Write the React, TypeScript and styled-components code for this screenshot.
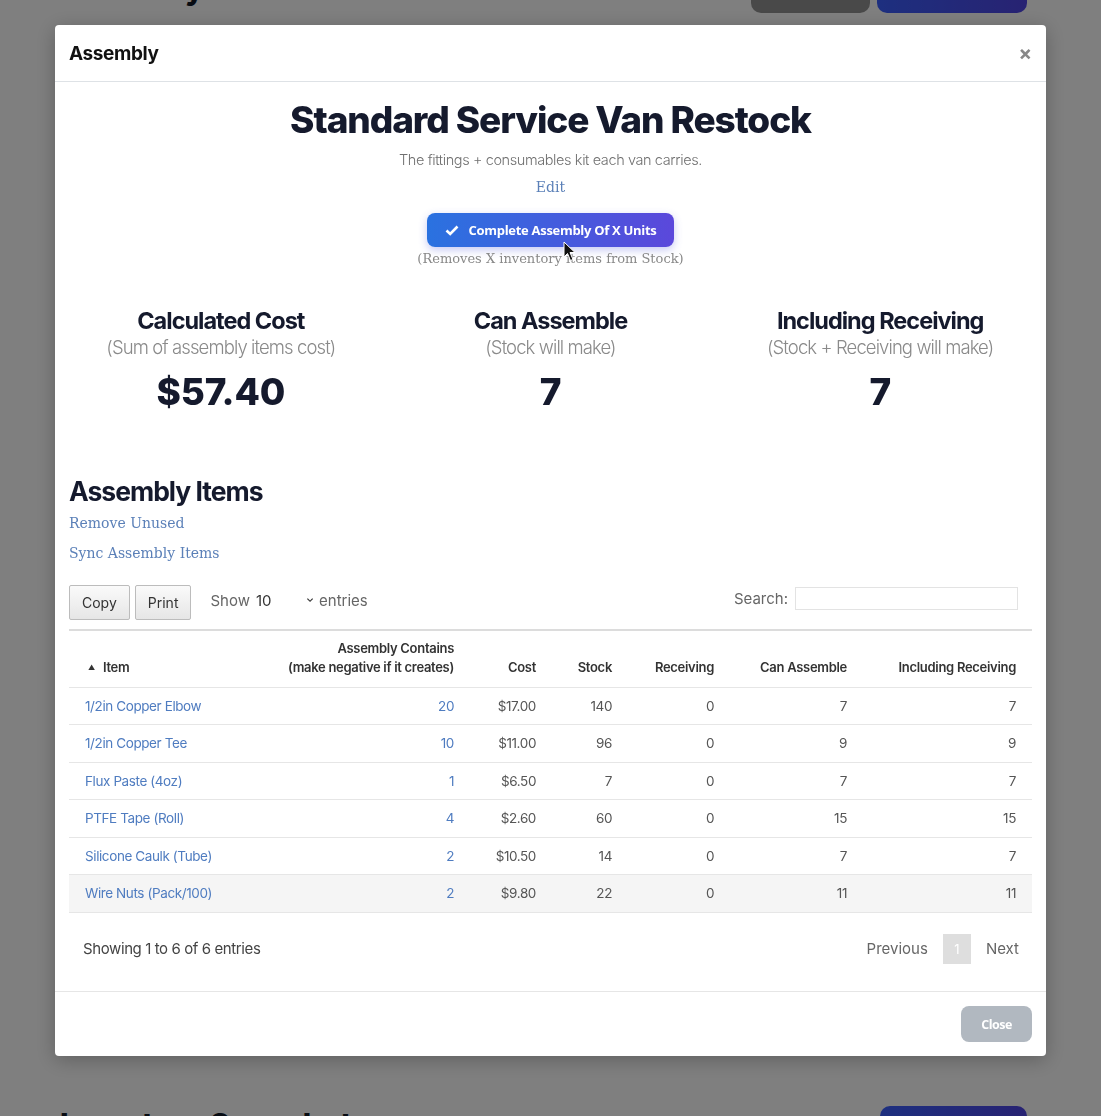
import React from 'react';
import styled, { createGlobalStyle } from 'styled-components';

// global page reset
const GlobalStyle = createGlobalStyle`
    html, body {
        margin: 0;
        padding: 0;
        height: 100%;
        overflow: hidden;
        background: #ffffff;
        font-family: Inter, "Noto Sans", sans-serif;
    }
`;

const SANS = `Inter, "Noto Sans", sans-serif`;
const SERIF = `"DejaVu Serif", "Liberation Serif", serif`;

// page behind the modal
const Page = styled.div`
    height: 1116px;
    padding: 0 74px 0 60px;
    display: flex;
    flex-direction: column;
    justify-content: space-between;
    box-sizing: border-box;
`;

const PageRow = styled.div<{ $top?: boolean }>`
    display: flex;
    align-items: center;
    justify-content: space-between;
    margin-top: ${p => (p.$top ? '-23px' : '0')};
    margin-bottom: ${p => (p.$top ? '0' : '-26px')};
`;

const PageTitle = styled.h1<{ $top?: boolean }>`
    margin: 0;
    font-size: 30px;
    font-weight: 800;
    color: #111827;
    position: relative;
    top: ${p => (p.$top ? '-6px' : '0')};
`;

const PageButtons = styled.div`
    display: flex;
    gap: 7px;
`;

const PageButton = styled.div<{ $dark?: boolean; $w: number }>`
    width: ${p => p.$w}px;
    height: 36px;
    border-radius: 10px;
    background: ${p => (p.$dark ? '#939393' : 'linear-gradient(90deg, #3b5fff, #5046e5)')};
`;

// modal overlay
const Overlay = styled.div`
    position: fixed;
    inset: 0;
    background: rgba(0, 0, 0, 0.5);
    display: flex;
    justify-content: center;
    padding-top: 25px;
`;

const Modal = styled.div`
    width: 991px;
    height: 1031px;
    background: #fff;
    border-radius: 4px;
    display: flex;
    flex-direction: column;
    box-shadow: 0 4px 20px rgba(0, 0, 0, 0.25);
`;

const ModalHeader = styled.div`
    height: 56px;
    padding: 0 14px;
    display: flex;
    align-items: center;
    justify-content: space-between;
    border-bottom: 1px solid #dee2e6;
`;

const ModalTitle = styled.h5`
    margin: 0;
    font-size: 19px;
    font-weight: 700;
    letter-spacing: -0.4px;
    color: #111;
`;

const CloseX = styled.span`
    font-size: 20px;
    font-weight: 700;
    color: #888;
    line-height: 1;
`;

const ModalBody = styled.div`
    flex: 1;
    padding: 0 14px;
    display: flex;
    flex-direction: column;
`;

const Hero = styled.div`
    display: flex;
    flex-direction: column;
    align-items: center;
    padding-top: 16px;
`;

const HeroTitle = styled.h2`
    margin: 0;
    font-size: 37px;
    font-weight: 800;
    letter-spacing: -1.1px;
    color: #151a2d;
    line-height: 44px;
`;

const HeroSub = styled.div`
    margin-top: 9px;
    font-size: 14.5px;
    font-weight: 300;
    letter-spacing: -0.4px;
    color: #707070;
`;

const SerifLink = styled.a`
    font-family: ${SERIF};
    font-size: 14px;
    color: #5b80b8;
    text-decoration: none;
    cursor: pointer;
`;

const EditLink = styled(SerifLink)`
    margin-top: 11px;
`;

const PrimaryButton = styled.button`
    margin-top: 18px;
    width: 247px;
    height: 34px;
    border: none;
    border-radius: 8px;
    background: linear-gradient(90deg, #2a72e0, #5b48db);
    box-shadow: 0 3px 8px rgba(70, 80, 220, 0.3);
    color: #fff;
    font-family: "Open Sans", ${SANS};
    font-size: 13px;
    font-weight: 700;
    letter-spacing: -0.3px;
    display: flex;
    align-items: center;
    justify-content: center;
    gap: 10px;
`;

const Note = styled.div`
    margin-top: 4px;
    font-family: ${SERIF};
    font-size: 13px;
    color: #888;
    position: relative;
`;

const StatsRow = styled.div`
    display: grid;
    grid-template-columns: repeat(3, 1fr);
    margin: 40px -13px 0;
`;

const Stat = styled.div`
    display: flex;
    flex-direction: column;
    align-items: center;
`;

const StatTitle = styled.div`
    font-size: 23.5px;
    font-weight: 700;
    letter-spacing: -1px;
    color: #151a2d;
`;

const StatSub = styled.div`
    margin-top: 1px;
    font-size: 18.5px;
    font-weight: 300;
    letter-spacing: -0.9px;
    color: #8a8a8a;
`;

const StatValue = styled.div`
    margin-top: 11px;
    font-size: 37px;
    font-weight: 800;
    letter-spacing: -0.2px;
    color: #151a2d;
`;

const SectionTitle = styled.h3`
    margin: 61px 0 0;
    font-size: 26.5px;
    font-weight: 700;
    letter-spacing: -1px;
    color: #151a2d;
`;

const LinkStack = styled.div`
    display: flex;
    flex-direction: column;
    gap: 14px;
    margin-top: 8px;
`;

const Controls = styled.div`
    display: flex;
    align-items: center;
    margin-top: 24px;
    padding-bottom: 9px;
`;

const ToolButton = styled.button`
    height: 35px;
    padding: 0 12px;
    margin-right: 5px;
    border: 1px solid #bcbcbc;
    border-radius: 2px;
    background: linear-gradient(#fafafa, #e6e6e6);
    font-family: ${SANS};
    font-size: 14px;
    color: #333;
`;

const Length = styled.div`
    margin-left: 14px;
    display: flex;
    align-items: center;
    font-size: 15px;
    color: #666;
    flex: 1;
    position: relative;
    top: -2px;
`;

const LengthValue = styled.span`
    color: #333;
    margin-left: 6px;
    width: 50px;
`;

const Chevron = styled.span`
    font-size: 10px;
    font-weight: 700;
    color: #333;
    margin-right: 5px;
    position: relative;
    top: -3px;
`;

const SearchLabel = styled.label`
    font-size: 15px;
    color: #666;
    display: flex;
    align-items: center;
    gap: 7px;
    margin-right: 14px;
    position: relative;
    top: -4px;
`;

const SearchInput = styled.input`
    width: 221px;
    height: 21px;
    border: 1px solid #e3e3e3;
    padding: 0;
`;

const Table = styled.table`
    width: 100%;
    border-collapse: collapse;
    border-top: 2px solid #dcdcdc;
    table-layout: fixed;
`;

const Th = styled.th<{ $w: number; $left?: boolean }>`
    box-sizing: border-box;
    width: ${p => p.$w}px;
    padding: 0 16px 10px;
    height: 57px;
    vertical-align: bottom;
    text-align: ${p => (p.$left ? 'left' : 'right')};
    font-size: 13px;
    font-weight: 600;
    letter-spacing: -0.3px;
    color: #333;
    border-bottom: 1px solid #e6e6e6;
    line-height: 19px;
    white-space: nowrap;
`;

const SortIcon = styled.span`
    font-size: 7px;
    margin: 0 8px 0 3px;
    vertical-align: 2px;
`;

const Tr = styled.tr<{ $hover?: boolean }>`
    background: ${p => (p.$hover ? '#f5f5f5' : 'transparent')};
`;

const Td = styled.td<{ $left?: boolean; $link?: boolean }>`
    height: 36.5px;
    padding: 0 16px;
    text-align: ${p => (p.$left ? 'left' : 'right')};
    font-size: 13.5px;
    font-weight: 400;
    letter-spacing: -0.4px;
    color: ${p => (p.$link ? '#4f7cc0' : '#555')};
    border-bottom: 1px solid #e6e6e6;
    white-space: nowrap;
`;

const TableFooter = styled.div`
    display: flex;
    align-items: center;
    justify-content: space-between;
    padding: 21px 13px 0 14px;
`;

const Info = styled.div`
    font-size: 15px;
    letter-spacing: -0.4px;
    color: #444;
`;

const Pager = styled.div`
    display: flex;
    align-items: center;
    gap: 15px;
    font-size: 15px;
    color: #666;
`;

const PageNum = styled.span`
    width: 28px;
    height: 30px;
    background: #dedede;
    color: #fff;
    font-size: 13px;
    display: flex;
    align-items: center;
    justify-content: center;
`;

const ModalFooter = styled.div`
    height: 64px;
    border-top: 1px solid #e6e6e6;
    display: flex;
    align-items: center;
    justify-content: flex-end;
    padding: 0 14px;
`;

const CloseButton = styled.button`
    width: 71px;
    height: 36px;
    border: none;
    border-radius: 8px;
    background: #b1b8c0;
    color: #fff;
    font-family: "Open Sans", ${SANS};
    font-size: 12.5px;
    font-weight: 700;
    letter-spacing: -0.5px;
`;

const Cursor = styled.svg`
    position: absolute;
    left: 146px;
    top: -10px;
`;

interface Item {
    name: string;
    qty: number;
    cost: string;
    stock: number;
    receiving: number;
    can: number;
    incl: number;
}

const items: Item[] = [
    { name: '1/2in Copper Elbow', qty: 20, cost: '$17.00', stock: 140, receiving: 0, can: 7, incl: 7 },
    { name: '1/2in Copper Tee', qty: 10, cost: '$11.00', stock: 96, receiving: 0, can: 9, incl: 9 },
    { name: 'Flux Paste (4oz)', qty: 1, cost: '$6.50', stock: 7, receiving: 0, can: 7, incl: 7 },
    { name: 'PTFE Tape (Roll)', qty: 4, cost: '$2.60', stock: 60, receiving: 0, can: 15, incl: 15 },
    { name: 'Silicone Caulk (Tube)', qty: 2, cost: '$10.50', stock: 14, receiving: 0, can: 7, incl: 7 },
    { name: 'Wire Nuts (Pack/100)', qty: 2, cost: '$9.80', stock: 22, receiving: 0, can: 11, incl: 11 },
];

const stats = [
    { title: 'Calculated Cost', sub: '(Sum of assembly items cost)', value: '$57.40' },
    { title: 'Can Assemble', sub: '(Stock will make)', value: '7' },
    { title: 'Including Receiving', sub: '(Stock + Receiving will make)', value: '7' },
];

const App: React.FC = () => {
    return (
        <>
            <GlobalStyle />
            <Page>
                <PageRow $top>
                    <PageTitle $top>Inventory</PageTitle>
                    <PageButtons>
                        <PageButton $dark $w={119} />
                        <PageButton $w={150} />
                    </PageButtons>
                </PageRow>
                <PageRow>
                    <PageTitle>Inventory Snapshot</PageTitle>
                    <PageButtons>
                        <PageButton $w={147} />
                    </PageButtons>
                </PageRow>
            </Page>

            <Overlay>
                <Modal>
                    <ModalHeader>
                        <ModalTitle>Assembly</ModalTitle>
                        <CloseX>×</CloseX>
                    </ModalHeader>

                    <ModalBody>
                        <Hero>
                            <HeroTitle>Standard Service Van Restock</HeroTitle>
                            <HeroSub>The fittings + consumables kit each van carries.</HeroSub>
                            <EditLink>Edit</EditLink>
                            <PrimaryButton>
                                <svg width="14" height="11" viewBox="0 0 14 11">
                                    <path d="M1.5 5.5 L5.2 9 L12.5 1.5" stroke="#fff" strokeWidth="2.6" fill="none" />
                                </svg>
                                Complete Assembly Of X Units
                            </PrimaryButton>
                            <Note>
                                (Removes X inventory items from Stock)
                                <Cursor width="14" height="21" viewBox="0 0 14 21">
                                    <path d="M1 1 L1 16 L4.5 12.5 L7.5 19.5 L10 18.5 L7 11.5 L12 11.5 Z" fill="#111" stroke="#fff" strokeWidth="1" />
                                </Cursor>
                            </Note>
                        </Hero>

                        <StatsRow>
                            {stats.map(s => (
                                <Stat key={s.title}>
                                    <StatTitle>{s.title}</StatTitle>
                                    <StatSub>{s.sub}</StatSub>
                                    <StatValue>{s.value}</StatValue>
                                </Stat>
                            ))}
                        </StatsRow>

                        <SectionTitle>Assembly Items</SectionTitle>
                        <LinkStack>
                            <SerifLink>Remove Unused</SerifLink>
                            <SerifLink>Sync Assembly Items</SerifLink>
                        </LinkStack>

                        <Controls>
                            <ToolButton>Copy</ToolButton>
                            <ToolButton>Print</ToolButton>
                            <Length>
                                Show <LengthValue>10</LengthValue>
                                <Chevron>⌄</Chevron> entries
                            </Length>
                            <SearchLabel>
                                Search:
                                <SearchInput />
                            </SearchLabel>
                        </Controls>

                        <Table>
                            <thead>
                                <tr>
                                    <Th $w={201} $left><SortIcon>▲</SortIcon>Item</Th>
                                    <Th $w={200}>Assembly Contains<br />(make negative if it creates)</Th>
                                    <Th $w={82}>Cost</Th>
                                    <Th $w={76}>Stock</Th>
                                    <Th $w={102}>Receiving</Th>
                                    <Th $w={133}>Can Assemble</Th>
                                    <Th $w={169}>Including Receiving</Th>
                                </tr>
                            </thead>
                            <tbody>
                                {items.map((it, i) => (
                                    <Tr key={it.name} $hover={i === items.length - 1}>
                                        <Td $left $link>{it.name}</Td>
                                        <Td $link>{it.qty}</Td>
                                        <Td>{it.cost}</Td>
                                        <Td>{it.stock}</Td>
                                        <Td>{it.receiving}</Td>
                                        <Td>{it.can}</Td>
                                        <Td>{it.incl}</Td>
                                    </Tr>
                                ))}
                            </tbody>
                        </Table>

                        <TableFooter>
                            <Info>Showing 1 to 6 of 6 entries</Info>
                            <Pager>
                                <span>Previous</span>
                                <PageNum>1</PageNum>
                                <span>Next</span>
                            </Pager>
                        </TableFooter>
                    </ModalBody>

                    <ModalFooter>
                        <CloseButton>Close</CloseButton>
                    </ModalFooter>
                </Modal>
            </Overlay>
        </>
    );
};

export default App;
